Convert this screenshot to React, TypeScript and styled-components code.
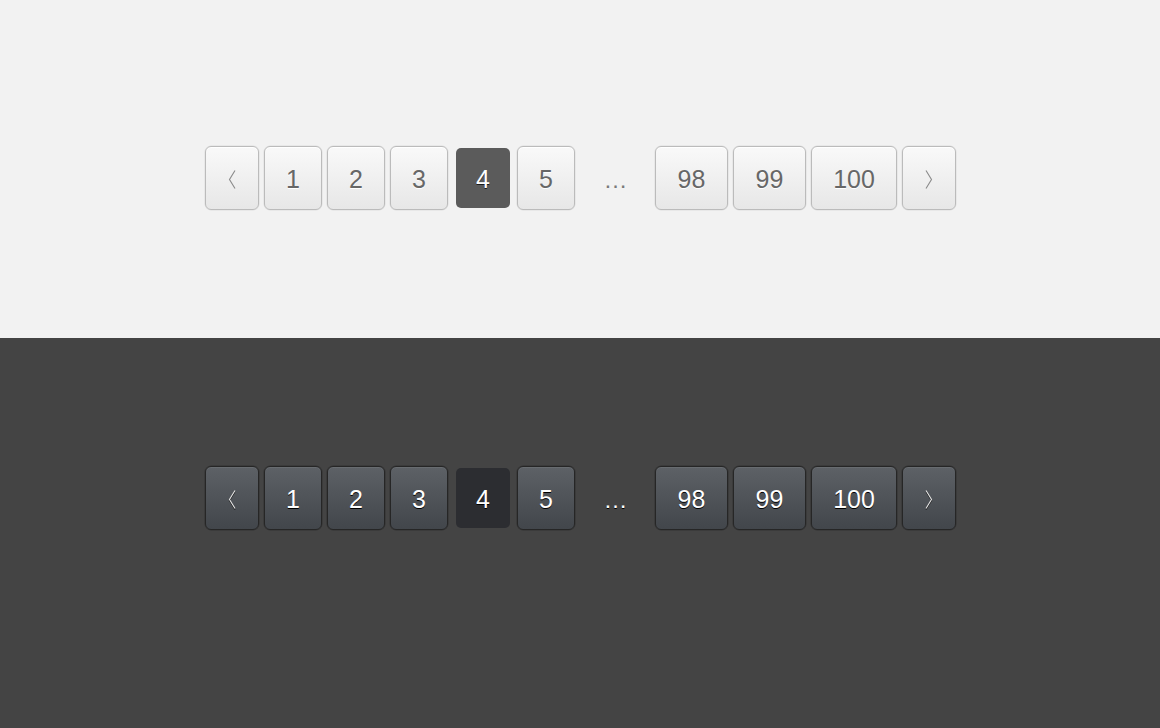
import React from "react";
import styled, { createGlobalStyle, css } from "styled-components";

const Global = createGlobalStyle`
  html, body { margin: 0; padding: 0; }
  body { font-family: "Liberation Sans", Arial, sans-serif; background: #444; }
  * { box-sizing: border-box; }
`;

const Page = styled.div`
  width: 1160px;
  height: 728px;
  display: flex;
  flex-direction: column;
`;

const Section = styled.section<{ $dark?: boolean }>`
  display: flex;
  justify-content: center;
  align-items: flex-start;
  padding-left: 1px;
  ${(p) =>
    p.$dark
      ? css`
          background: #444444;
          height: 390px;
          padding-top: 128px;
        `
      : css`
          background: #f2f2f2;
          height: 338px;
          padding-top: 146px;
        `}
`;

const Bar = styled.nav`
  display: flex;
  gap: 5px;
  align-items: center;
`;

type Size = "arrow" | "one" | "two" | "three";
const widths: Record<Size, number> = { arrow: 54, one: 58, two: 73, three: 86 };

const Btn = styled.button<{ $dark?: boolean; $size: Size }>`
  height: 64px;
  width: ${(p) => widths[p.$size]}px;
  padding: 2px 0 0;
  border-radius: 6px;
  font-family: "Liberation Sans", Arial, sans-serif;
  font-size: 25px;
  line-height: 1;
  display: flex;
  align-items: center;
  justify-content: center;
  cursor: pointer;
  ${(p) =>
    p.$dark
      ? css`
          border: 1px solid #262626;
          background: linear-gradient(#5d6166, #42464b);
          box-shadow: inset 0 1px 0 rgba(255, 255, 255, 0.07), 0 0 0 0.5px rgba(0, 0, 0, 0.25);
          color: #ffffff;
          text-shadow: 0 1px 0 #000;
        `
      : css`
          border: 1px solid #bbbbbb;
          background: linear-gradient(#f9f9f9, #e7e7e7);
          box-shadow: inset 0 1px 0 #ffffff, 0 0 0 0.5px rgba(0, 0, 0, 0.08);
          color: #676767;
          text-shadow: 0 1px 0 #ffffff;
        `}
`;

const Active = styled.span<{ $dark?: boolean }>`
  width: 54px;
  height: 60px;
  margin: 0 2px 0 3px;
  border-radius: 5px;
  display: flex;
  align-items: center;
  justify-content: center;
  padding-top: 2px;
  font-family: "Liberation Sans", Arial, sans-serif;
  font-size: 25px;
  line-height: 1;
  color: #ffffff;
  ${(p) =>
    p.$dark
      ? css`
          background: #2c2d31;
          text-shadow: 0 1px 0 #000;
        `
      : css`
          background: #5b5b5b;
          text-shadow: 0 1px 0 #1a1a1a;
        `}
`;

const Ellipsis = styled.span<{ $dark?: boolean }>`
  width: 70px;
  text-align: center;
  font-family: "Liberation Sans", Arial, sans-serif;
  font-size: 24px;
  letter-spacing: -1px;
  color: ${(p) => (p.$dark ? "#ffffff" : "#7a7a7a")};
  ${(p) => (p.$dark ? "text-shadow: 0 1px 0 #000;" : "")}
  padding-top: 4px;
`;

const Chevron: React.FC<{ dir: "left" | "right"; dark?: boolean }> = ({ dir, dark }) => (
  <svg width="8" height="19" viewBox="0 0 8 19" style={{ overflow: "visible" }}>
    {dark && (
      <path
        d={dir === "left" ? "M7 1.5 L1.5 10.5 L7 19.5" : "M1 1.5 L6.5 10.5 L1 19.5"}
        fill="none"
        stroke="#111"
        strokeWidth="1.1"
      />
    )}
    <path
      d={dir === "left" ? "M7 0.5 L1.5 9.5 L7 18.5" : "M1 0.5 L6.5 9.5 L1 18.5"}
      fill="none"
      stroke={dark ? "#e6e6e6" : "#8a8a8a"}
      strokeWidth="1.1"
    />
  </svg>
);

const sizeOf = (label: string): Size => (label.length === 1 ? "one" : label.length === 2 ? "two" : "three");

const Pager: React.FC<{ dark?: boolean }> = ({ dark }) => (
  <Bar>
    <Btn $dark={dark} $size="arrow" aria-label="Previous">
      <Chevron dir="left" dark={dark} />
    </Btn>
    {["1", "2", "3"].map((n) => (
      <Btn key={n} $dark={dark} $size={sizeOf(n)}>
        {n}
      </Btn>
    ))}
    <Active $dark={dark}>4</Active>
    <Btn $dark={dark} $size="one">5</Btn>
    <Ellipsis $dark={dark}>…</Ellipsis>
    {["98", "99", "100"].map((n) => (
      <Btn key={n} $dark={dark} $size={sizeOf(n)}>
        {n}
      </Btn>
    ))}
    <Btn $dark={dark} $size="arrow" aria-label="Next">
      <Chevron dir="right" dark={dark} />
    </Btn>
  </Bar>
);

export default function App() {
  return (
    <>
      <Global />
      <Page>
        <Section>
          <Pager />
        </Section>
        <Section $dark>
          <Pager dark />
        </Section>
      </Page>
    </>
  );
}
